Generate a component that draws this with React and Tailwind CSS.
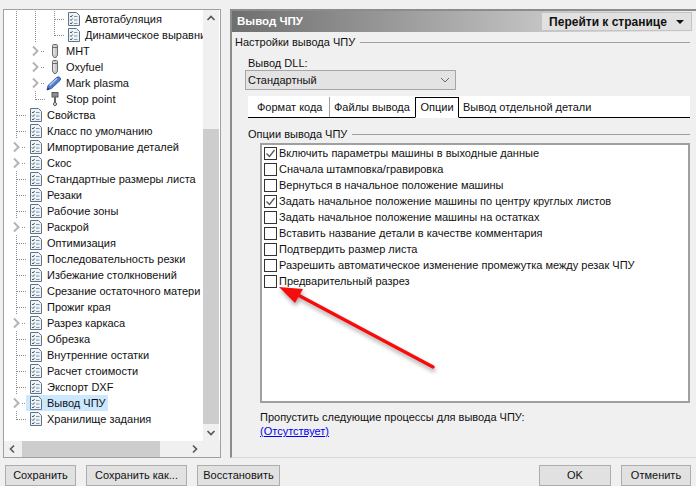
import React from "react";

const FONT = "font-['Liberation_Sans',sans-serif]";

function Cell({ kind }) {
  const dot = { stroke: "#8a8a8a", strokeWidth: 1, strokeDasharray: "1 1", fill: "none" };
  return (
    <svg width="19" height="16" viewBox="0 0 19 16" className="shrink-0 block">
      {kind === "v" && <line x1="9.5" y1="0" x2="9.5" y2="16" style={dot} />}
      {kind === "tee" && (
        <>
          <line x1="9.5" y1="0" x2="9.5" y2="16" style={dot} />
          <line x1="10" y1="8.5" x2="19" y2="8.5" style={dot} />
        </>
      )}
      {kind === "end" && (
        <>
          <line x1="9.5" y1="0" x2="9.5" y2="9" style={dot} />
          <line x1="10" y1="8.5" x2="19" y2="8.5" style={dot} />
        </>
      )}
      {kind === "chev" && (
        <>
          <path d="M7 3.5 L11.5 8 L7 12.5" stroke="#b4b4b4" strokeWidth="2" fill="none" />
          <line x1="15" y1="8.5" x2="19" y2="8.5" style={dot} />
        </>
      )}
    </svg>
  );
}

function PageIcon() {
  return (
    <svg width="12" height="14" viewBox="0 0 12 14" className="block">
      <path d="M0.5 0.5 H8.5 L11.5 3.5 V13.5 H0.5 Z" fill="#eef3f8" stroke="#5f7488" />
      <path d="M2 4 L3 5 L4.6 3 M2 7.5 L3 8.5 L4.6 6.5 M2 11 L3 12 L4.6 10" stroke="#4a5a6a" fill="none" />
      <path d="M6 4.5 H9.5 M6 8 H9.5 M6 11.5 H9.5" stroke="#8a98a6" />
    </svg>
  );
}

function TorchIcon() {
  return (
    <svg width="12" height="14" viewBox="0 0 12 14" className="block">
      <path d="M3.5 1.5 Q3.5 0.5 4.5 0.5 H7.5 Q8.5 0.5 8.5 1.5 V11 L7 13.5 H5 L3.5 11 Z" fill="#c9c9c9" stroke="#6e6e6e" />
      <path d="M5 2 V11" stroke="#f4f4f4" />
      <path d="M4 3.5 H8" stroke="#6e6e6e" />
    </svg>
  );
}

function PenIcon() {
  return (
    <svg width="16" height="15" viewBox="0 0 16 15" className="block">
      <path d="M1 14 L2 9.5 L10.5 1.5 Q12.5 0 14 1.5 Q15.5 3 14 4.5 L5.5 12.5 Z" fill="#4f7fd0" stroke="#27508f" strokeWidth="0.8" />
      <path d="M3.5 9.5 L11 2.5" stroke="#bcd2f2" strokeWidth="1.2" />
      <path d="M1 14 L2 11.5 L3.5 13 Z" fill="#16305e" />
    </svg>
  );
}

function StopIcon() {
  return (
    <svg width="12" height="14" viewBox="0 0 12 14" className="block">
      <rect x="3" y="0.5" width="6" height="4.5" fill="#8d8d8d" stroke="#5a5a5a" />
      <rect x="5" y="5" width="2" height="5" fill="#666" />
      <circle cx="6" cy="12" r="1.5" fill="#fff" stroke="#444" />
    </svg>
  );
}

const rows = [
  { c: ["v", "v", "tee"], icon: "page", t: "Автотабуляция" },
  { c: ["v", "v", "end"], icon: "page", t: "Динамическое выравни" },
  { c: ["v", "chev"], icon: "torch", t: "MHT" },
  { c: ["v", "chev"], icon: "torch", t: "Oxyfuel" },
  { c: ["v", "chev"], icon: "pen", t: "Mark plasma" },
  { c: ["v", "end"], icon: "stop", t: "Stop point" },
  { c: ["tee"], icon: "page", t: "Свойства" },
  { c: ["tee"], icon: "page", t: "Класс по умолчанию" },
  { c: ["chev"], icon: "page", t: "Импортирование деталей" },
  { c: ["chev"], icon: "page", t: "Скос" },
  { c: ["tee"], icon: "page", t: "Стандартные размеры листа" },
  { c: ["tee"], icon: "page", t: "Резаки" },
  { c: ["tee"], icon: "page", t: "Рабочие зоны" },
  { c: ["chev"], icon: "page", t: "Раскрой" },
  { c: ["tee"], icon: "page", t: "Оптимизация" },
  { c: ["tee"], icon: "page", t: "Последовательность резки" },
  { c: ["tee"], icon: "page", t: "Избежание столкновений" },
  { c: ["tee"], icon: "page", t: "Срезание остаточного матери" },
  { c: ["tee"], icon: "page", t: "Прожиг края" },
  { c: ["chev"], icon: "page", t: "Разрез каркаса" },
  { c: ["tee"], icon: "page", t: "Обрезка" },
  { c: ["tee"], icon: "page", t: "Внутренние остатки" },
  { c: ["tee"], icon: "page", t: "Расчет стоимости" },
  { c: ["tee"], icon: "page", t: "Экспорт DXF" },
  { c: ["chev"], icon: "page", t: "Вывод ЧПУ", sel: true },
  { c: ["end"], icon: "page", t: "Хранилище задания" },
];

function TreeRow({ r }) {
  const Icon = { page: PageIcon, torch: TorchIcon, pen: PenIcon, stop: StopIcon }[r.icon];
  return (
    <div className="flex items-center h-4 shrink-0 whitespace-nowrap">
      {r.c.map((k, i) => (
        <Cell key={i} kind={k} />
      ))}
      <div className={`flex items-center h-4 pl-[4px] pr-[2px] ${r.sel ? "bg-[#cce8ff]" : ""}`}>
        <div className={`w-[17px] shrink-0 flex justify-start ${r.icon === "pen" ? "-ml-[3px] mr-[3px]" : ""}`}>
          <Icon />
        </div>
        <span className="leading-4">{r.t}</span>
      </div>
    </div>
  );
}

function Chevron({ dir }) {
  const d = {
    up: "M1.5 6 L5 2.5 L8.5 6",
    down: "M1.5 3 L5 6.5 L8.5 3",
    left: "M6 1.5 L2.5 5 L6 8.5",
    right: "M3 1.5 L6.5 5 L3 8.5",
  }[dir];
  return (
    <svg width="10" height="10" viewBox="0 0 10 10" className="block">
      <path d={d} stroke="#555" strokeWidth="1.6" fill="none" />
    </svg>
  );
}

function TreePanel() {
  return (
    <div className="w-[218px] ml-[3px] border border-[#a0a0a0] bg-white flex flex-col shrink-0 overflow-hidden">
      <div className="flex flex-1 min-h-0">
        <div className="w-[199px] pl-[3px] pt-[1px] overflow-hidden flex flex-col">
          {rows.map((r, i) => (
            <TreeRow key={i} r={r} />
          ))}
        </div>
        <div className="w-[16px] bg-[#f0f0f0] flex flex-col items-center">
          <div className="h-[17px] flex items-center justify-center"><Chevron dir="up" /></div>
          <div className="flex-1 w-full pt-[102px]">
            <div className="h-full bg-[#cdcdcd]"></div>
          </div>
          <div className="h-[17px] flex items-center justify-center"><Chevron dir="down" /></div>
        </div>
      </div>
      <div className="h-[16px] bg-[#f0f0f0] flex items-center shrink-0">
        <div className="w-[18px] flex justify-center"><Chevron dir="left" /></div>
        <div className="w-[138px] h-full bg-[#cdcdcd]"></div>
        <div className="flex-1"></div>
        <div className="w-[18px] mr-[16px] flex justify-center"><Chevron dir="right" /></div>
      </div>
    </div>
  );
}

function SectionTitle({ children, className }) {
  return (
    <div className={`flex items-center gap-[5px] ${className}`}>
      <span className="whitespace-nowrap leading-4">{children}</span>
      <div className="flex-1 h-px bg-[#a0a0a0]"></div>
    </div>
  );
}

const options = [
  ["Включить параметры машины в выходные данные", true],
  ["Сначала штамповка/гравировка", false],
  ["Вернуться в начальное положение машины", false],
  ["Задать начальное положение машины по центру круглых листов", true],
  ["Задать начальное положение машины на остатках", false],
  ["Вставить название детали в качестве комментария", false],
  ["Подтвердить размер листа", false],
  ["Разрешить автоматическое изменение промежутка между резак ЧПУ", false],
  ["Предварительный разрез", false],
];

function Option({ label, on }) {
  return (
    <div className="h-4 flex items-center gap-[2px] whitespace-nowrap">
      <div className="w-[13px] h-[13px] border border-[#333] bg-white shrink-0 flex items-center justify-center">
        {on && (
          <svg width="11" height="11" viewBox="0 0 11 11" className="block">
            <path d="M1.5 5.5 L4.5 8.5 L9.5 2" stroke="#555" strokeWidth="1.3" fill="none" />
          </svg>
        )}
      </div>
      <span className="leading-4">{label}</span>
    </div>
  );
}

function RightPanel() {
  return (
    <div className="flex-1 ml-[9px] border-t-2 border-l-2 border-[#8c8c8c] border-b border-b-[#d8d8d8] flex flex-col min-w-0">
      <div className="h-[21px] flex items-center justify-between pl-[5px] pr-[4px] bg-gradient-to-r from-[#6f6f6f] to-[#f0f0f0] shrink-0">
        <span className="font-bold text-white text-[11.5px]">Вывод ЧПУ</span>
        <div className="w-[151px] h-[19px] bg-[#e1e1e1] border border-[#c4c4c4] flex items-center justify-center gap-[9px] font-bold text-[#111] text-[12px]">
          <span>Перейти к странице</span>
          <svg width="8" height="4" viewBox="0 0 8 4" className="block"><path d="M0 0 H8 L4 4 Z" fill="#111" /></svg>
        </div>
      </div>
      <div className="flex-1 flex flex-col pl-[3px] pr-[6px] pt-[1px]">
        <SectionTitle className="mt-[1px]">Настройки вывода ЧПУ</SectionTitle>
        <div className="pl-[13px] mt-[5px] leading-4">Вывод DLL:</div>
        <div className="ml-[10px] w-[211px] h-[20px] bg-[#e3e3e3] border border-[#a6a6a6] flex items-center justify-between pl-[2px] pr-[5px] mt-[-1px]">
          <span>Стандартный</span>
          <svg width="10" height="6" viewBox="0 0 10 6" className="block"><path d="M1 1 L5 5 L9 1" stroke="#666" fill="none" /></svg>
        </div>
        <div className="ml-[13px] mt-[6px] h-[22px] bg-white border-b border-black flex items-end pl-[4px]">
          <div className="w-[78px] h-[20px] pl-[5px] flex items-center border-r border-[#a0a0a0]">Формат кода</div>
          <div className="w-[85px] h-[20px] pl-[4px] flex items-center">Файлы вывода</div>
          <div className="w-[44px] h-[21px] -mb-px border border-black border-b-white bg-white flex items-center justify-center z-10">Опции</div>
          <div className="h-[20px] pl-[4px] flex items-center">Вывод отдельной детали</div>
        </div>
        <SectionTitle className="ml-[13px] mt-[8px]">Опции вывода ЧПУ</SectionTitle>
        <div className="ml-[25px] mt-[1px] h-[260px] border-2 border-[#a0a0a0] bg-white pl-[2px] flex flex-col">
          {options.map(([l, o], i) => (
            <Option key={i} label={l} on={o} />
          ))}
        </div>
        <div className="ml-[25px] mt-[6px] leading-4">Пропустить следующие процессы для вывода ЧПУ:</div>
        <div className="ml-[25px] mt-[-2px] leading-4 text-[#0000ee] underline">(Отсутствует)</div>
      </div>
    </div>
  );
}

function Btn({ children, className }) {
  return (
    <div className={`h-[21px] bg-[#e1e1e1] border border-[#adadad] flex items-center justify-center ${className}`}>
      {children}
    </div>
  );
}

export default function App() {
  return (
    <div className={`${FONT} w-[696px] h-[486px] bg-[#f0f0f0] text-[11px] text-[#111] overflow-hidden flex flex-col pt-[9px] relative`}>
      <div className="h-[449px] flex shrink-0">
        <TreePanel />
        <RightPanel />
      </div>
      <div className="flex pl-[5px] pr-[5px] pt-[7px]">
        <Btn className="w-[71px]">Сохранить</Btn>
        <Btn className="w-[101px] ml-[10px]">Сохранить как...</Btn>
        <Btn className="w-[83px] ml-[10px]">Восстановить</Btn>
        <div className="flex-1"></div>
        <Btn className="w-[72px]">OK</Btn>
        <Btn className="w-[70px] ml-[10px]">Отменить</Btn>
      </div>
      <svg width="696" height="486" viewBox="0 0 696 486" className="absolute left-0 top-0 pointer-events-none">
        <defs>
          <filter id="sh" x="-20%" y="-20%" width="140%" height="140%">
            <feDropShadow dx="1" dy="3" stdDeviation="2" floodColor="#000" floodOpacity="0.35" />
          </filter>
        </defs>
        <g filter="url(#sh)">
          <path d="M433 367 L298 295" stroke="#f30c0c" strokeWidth="3.5" strokeLinecap="round" fill="none" />
          <path d="M279 287 L303 289 L295 303 Z" fill="#f30c0c" />
        </g>
      </svg>
    </div>
  );
}
